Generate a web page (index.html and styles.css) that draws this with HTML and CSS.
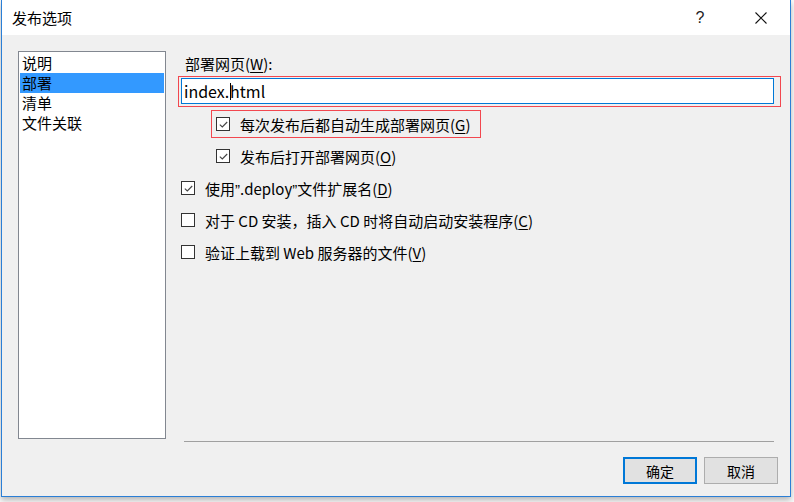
FILE: index.html
```html
<!DOCTYPE html>
<html lang="zh-CN">
<head>
  <meta charset="UTF-8">
  <title>发布选项</title>
  <link rel="stylesheet" href="styles.css">
</head>
<body>

  <div class="window">
    <!-- Title bar -->
    <div class="titlebar">
      <div class="title">发布选项</div>
      <div class="help">?</div>
      <div class="close">
        <svg width="12" height="12" viewBox="0 0 12 12"><path d="M0.5 0.5 L11.5 11.5 M11.5 0.5 L0.5 11.5" stroke="#111" stroke-width="1.1" fill="none"/></svg>
      </div>
    </div>

    <div class="client">
      <div class="main">
        <div class="list">
          <div class="item">说明</div>
          <div class="item selected">部署</div>
          <div class="item">清单</div>
          <div class="item">文件关联</div>
        </div>

        <div class="panel">
          <div class="label">部署网页(<u>W</u>):</div>
          <div class="mark field-mark">
            <div class="field">index.<span class="caret"></span>html</div>
          </div>

          <div class="options">
            <div class="opt">
              <div class="mark opt-mark">
                <span class="check on"><svg width="11" height="11" viewBox="0 0 11 11"><path d="M1.8 5.6 L4.3 8 L9.2 3" stroke="#444" stroke-width="1.1" fill="none"/></svg></span>
                <span class="text">每次发布后都自动生成部署网页(<u>G</u>)</span>
              </div>
            </div>
            <div class="opt sub">
              <span class="check on"><svg width="11" height="11" viewBox="0 0 11 11"><path d="M1.8 5.6 L4.3 8 L9.2 3" stroke="#444" stroke-width="1.1" fill="none"/></svg></span>
              <span class="text">发布后打开部署网页(<u>O</u>)</span>
            </div>
            <div class="opt">
              <span class="check on"><svg width="11" height="11" viewBox="0 0 11 11"><path d="M1.8 5.6 L4.3 8 L9.2 3" stroke="#444" stroke-width="1.1" fill="none"/></svg></span>
              <span class="text">使用<span class="q">”</span>.deploy<span class="q">”</span>文件扩展名(<u>D</u>)</span>
            </div>
            <div class="opt">
              <span class="check"></span>
              <span class="text">对于 CD 安装，插入 CD 时将自动启动安装程序(<u>C</u>)</span>
            </div>
            <div class="opt">
              <span class="check"></span>
              <span class="text">验证上载到 Web 服务器的文件(<u>V</u>)</span>
            </div>
          </div>
        </div>
      </div>

      <div class="sep"></div>

      <div class="buttons">
        <button class="btn default">确定</button>
        <button class="btn">取消</button>
      </div>
    </div>
  </div>

</body>
</html>
```

FILE: styles.css
```css
body {
  margin: 0;
  padding: 0;
  background: #fafafa;
  font-family: "Noto Sans CJK SC", "Microsoft YaHei", sans-serif;
  color: #000;
  overflow: hidden;
  height: 502px;
}

.window {
  margin-left: 1px;
  width: 788px;
  height: 496px;
  background: #f0f0f0;
  border: 1px solid #2b7fd6;
  border-top: none;
  box-shadow: 0 3px 6px rgba(0, 0, 0, 0.28);
}

/* Title bar */
.titlebar {
  height: 35px;
  background: #fff;
  display: flex;
  align-items: center;
}

.title {
  font-size: 15px;
  margin-left: 10px;
  flex: 1;
}

.help {
  font-size: 16px;
  width: 14px;
  text-align: center;
  margin-right: 48px;
  font-family: "Liberation Sans", sans-serif;
  color: #222;
}

.close {
  width: 12px;
  height: 12px;
  margin-right: 23px;
  display: flex;
}

/* Client area */
.client {
  padding-top: 16px;
}

.main {
  display: flex;
  height: 387px;
}

.list {
  margin-left: 16px;
  height: 385px;
  background: #fff;
  border: 1px solid #828790;
  padding: 1px 1px 0 1px;
  width: 144px;
}

.item {
  height: 20px;
  line-height: 20px;
  font-size: 15px;
  padding-left: 2px;
}

.item.selected {
  background: #3399ff;
}

.panel {
  margin-left: 12px;
  display: flex;
  flex-direction: column;
}

.label {
  font-size: 15px;
  height: 20px;
  line-height: 20px;
  margin-top: 3px;
  padding-left: 7px;
}

.label u, .text u {
  text-underline-offset: 2px;
}

/* Red annotation boxes */
.mark {
  border: 1px solid #f2474f;
}

.field-mark {
  margin-top: 2px;
  width: 593px;
  height: 26px;
  padding: 1px 6px 2px 2px;
}

.field {
  height: 24px;
  border: 1px solid #0078d7;
  background: #fff;
  font-size: 16px;
  line-height: 23px;
  padding-left: 2px;
  display: flex;
  align-items: center;
}

.caret {
  display: inline-block;
  width: 1px;
  height: 17px;
  background: #000;
  margin: 0 -1px 0 1px;
}

.options {
  margin-top: 1px;
}

.opt {
  height: 32px;
  display: flex;
  align-items: center;
  padding-left: 3px;
}

.opt.sub {
  padding-left: 38px;
}

.opt-mark {
  margin-left: 30px;
  height: 26px;
  padding: 0 9px 0 4px;
  display: flex;
  align-items: center;
}

.check {
  width: 12px;
  height: 12px;
  border: 1px solid #333;
  background: #fff;
  display: flex;
  align-items: center;
  justify-content: center;
  flex-shrink: 0;
}

.text {
  margin-left: 10px;
  font-size: 15px;
  white-space: nowrap;
}

.q {
  font-family: "Liberation Sans", sans-serif;
}

.sep {
  margin: 3px 0 0 182px;
  width: 590px;
  border-top: 1px solid #a0a0a0;
}

.buttons {
  margin-top: 15px;
  display: flex;
  justify-content: flex-end;
  gap: 7px;
  padding-right: 12px;
}

.btn {
  width: 74px;
  height: 27px;
  background: #e1e1e1;
  border: 1px solid #adadad;
  font-family: "Noto Sans CJK SC", sans-serif;
  font-size: 14px;
  color: #000;
  padding: 0;
}

.btn.default {
  border: 2px solid #0078d7;
}
```
